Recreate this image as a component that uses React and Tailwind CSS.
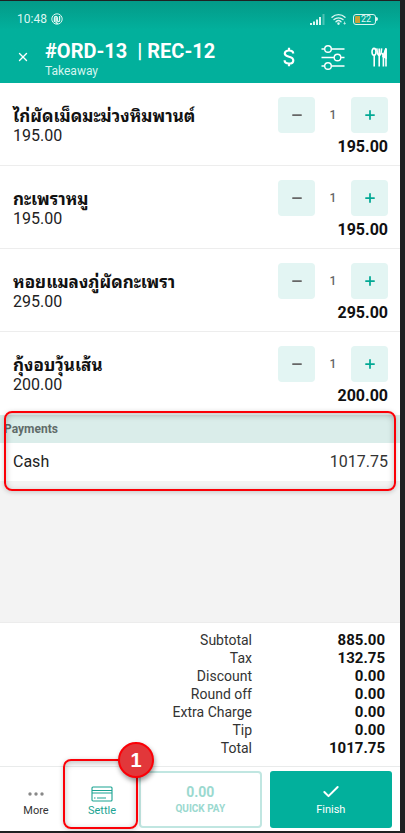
import { Minus, Plus, X, Check } from 'lucide-react';

const ITEMS = [
  { id: 1, name: 'ไก่ผัดเม็ดมะม่วงหิมพานต์', price: '195.00', qty: 1 },
  { id: 2, name: 'กะเพราหมู', price: '195.00', qty: 1 },
  { id: 3, name: 'หอยแมลงภู่ผัดกะเพรา', price: '295.00', qty: 1 },
  { id: 4, name: 'กุ้งอบวุ้นเส้น', price: '200.00', qty: 1 },
];

const TOTALS = [
  ['Subtotal', '885.00'],
  ['Tax', '132.75'],
  ['Discount', '0.00'],
  ['Round off', '0.00'],
  ['Extra Charge', '0.00'],
  ['Tip', '0.00'],
  ['Total', '1017.75'],
];

function StatusBar() {
  return (
    <div className="flex items-center justify-between h-9 pl-[17px] pr-[22px] text-[#dcf7f2]">
      <div className="flex items-center gap-1">
        <span className="text-xs">10:48</span>
        <svg width="12" height="12" viewBox="0 0 12 12" fill="none" stroke="currentColor">
          <circle cx="6" cy="6" r="5.2" strokeWidth="1" />
          <path d="M3.4 9V5a1.5 1.5 0 0 1 3 0v2.6a1.1 1.1 0 0 0 2.2 0V3M5 4.8v3.6a2 2 0 0 0 2 2" strokeWidth="1.3" />
        </svg>
      </div>
      <div className="flex items-center gap-[6px]">
        {/* Signal */}
        <svg width="15" height="11" viewBox="0 0 15 11" fill="currentColor">
          <path d="M0 9h2v2H0zM3 7.5h2V11H3zM6 5.5h2V11H6z" />
          <path d="M9 3h2v8H9z" />
          <path d="M12.5 0h2v11h-2z" opacity="0.35" />
        </svg>
        {/* Wifi */}
        <svg width="16" height="12" viewBox="0 0 16 12" fill="none" stroke="currentColor" strokeWidth="1.4" strokeLinecap="round">
          <path d="M1 4.2a9.6 9.6 0 0 1 13 0M3 6.6a6.6 6.6 0 0 1 9 0M5 8.8a3.6 3.6 0 0 1 5 0" />
          <circle cx="7.5" cy="10.6" r="0.6" fill="currentColor" />
          <path d="M13.6 9v2M12.8 10.3l.8.9.8-.9" strokeWidth="0.8" />
        </svg>
        {/* Battery */}
        <div className="flex items-center">
          <div className="flex items-center w-[23px] h-[11px] p-px gap-px rounded-[3px] border border-current">
            <span className="w-[5px] h-full rounded-l-[1px] bg-[#c9a23a]" />
            <span className="text-[9px] leading-none">22</span>
          </div>
          <span className="w-[2px] h-1 rounded-r bg-current" />
        </div>
      </div>
    </div>
  );
}

function Header() {
  return (
    <header className="h-[82px] shrink-0 bg-gradient-to-b from-[#039a88] via-[#02b09c] via-35% to-[#02b09c] text-white">
      <StatusBar />
      <div className="flex items-center pl-4 pr-[13px]">
        <button aria-label="Close" className="w-[14px] h-6 flex items-center justify-center">
          <X size={14} strokeWidth={2.4} />
        </button>
        <div className="ml-[15px] flex-1">
          <h1 className="text-xl leading-7 font-bold whitespace-pre">#ORD-13  | REC-12</h1>
          <p className="text-xs leading-3 text-[#d4f5ef]">Takeaway</p>
        </div>
        <div className="flex items-center gap-[26px]">
          <button aria-label="Payment">
            <svg width="12" height="20" viewBox="0 0 12 20" fill="none" stroke="currentColor" strokeWidth="2.2">
              <path d="M10.2 6.6C10.2 4.6 8.6 3.5 6 3.5S1.8 4.7 1.8 6.5C1.8 8.4 3.4 9.1 6 9.8s4.3 1.5 4.3 3.6S8.6 16.5 6 16.5 1.6 15.3 1.6 13.2M6 .8v3M6 16.4v2.8" />
            </svg>
          </button>
          <button aria-label="Options">
            <svg width="24" height="26" viewBox="0 0 24 26" fill="none" stroke="currentColor" strokeWidth="1.4">
              <path d="M.5 5h3M10.5 5h13M.5 13.5h12.5M20 13.5h3.5M.5 22h3M10.5 22h13" />
              <circle cx="7" cy="5" r="3.3" />
              <circle cx="16.5" cy="13.5" r="3.3" />
              <circle cx="7" cy="22" r="3.3" />
            </svg>
          </button>
          <button aria-label="Kitchen">
            {/* spoon, fork and knife */}
            <svg width="16" height="20" viewBox="0 0 16 20" fill="none" stroke="currentColor" strokeWidth="1.6">
              <ellipse cx="3" cy="4.8" rx="2" ry="3.4" />
              <path d="M3.2 8.2V19.5" />
              <path d="M5.8 1.4l.6 5L8.2 9l1.8-2.6.6-5M8.2 1.4v18.1" />
              <path d="M11 6l1.4 3.2L15 1.2v18.3M12.4 9v10.5" />
              <path d="M12 9.5 15 2v9z" fill="currentColor" />
            </svg>
          </button>
        </div>
      </div>
    </header>
  );
}

function OrderItem({ item }) {
  return (
    <li className="flex justify-between h-[83px] pt-[14px] pl-[13px] pr-3 border-b border-[#ededed] last:border-b-0">
      <div className="pt-[9px]">
        <h2 className="text-[17px] leading-5 font-bold text-[#111]">{item.name}</h2>
        <p className="text-base leading-5 text-[#222]">{item.price}</p>
      </div>
      <div>
        <div className="flex items-center">
          <button aria-label="Decrease" className="w-[37px] h-9 rounded-sm bg-[#e3f5f3] text-[#666] flex items-center justify-center">
            <Minus size={14} strokeWidth={3} />
          </button>
          <span className="w-9 text-center text-xs font-medium text-[#666]">{item.qty}</span>
          <button aria-label="Increase" className="w-[37px] h-9 rounded-sm bg-[#e3f5f3] text-[#02a894] flex items-center justify-center">
            <Plus size={14} strokeWidth={3} />
          </button>
        </div>
        <p className="mt-1 text-right text-base leading-5 font-bold text-[#111]">{item.price}</p>
      </div>
    </li>
  );
}

function Payments() {
  return (
    <section className="relative">
      <h3 className="h-7 flex items-center pl-1 bg-[#daedea] text-xs font-bold text-[#606b69]">Payments</h3>
      <div className="h-[38px] flex items-center justify-between pl-[13px] pr-3 bg-white text-base text-[#333]">
        <span className="text-[#222]">Cash</span>
        <span>1017.75</span>
      </div>
      {/* Highlight */}
      <div className="absolute -top-1 -bottom-[10px] inset-x-1 rounded-lg border-2 border-[#fb0007] shadow-[0_1px_5px_rgba(0,0,0,0.2),inset_0_2px_6px_rgba(0,0,0,0.25)] pointer-events-none" />
    </section>
  );
}

function BottomBar() {
  return (
    <footer className="flex h-[65px] shrink-0 pt-1 pb-[3px] pl-[3px] pr-2 border-t border-[#e9ebeb] bg-white text-xs">
      <button className="w-[66px] flex flex-col items-center text-[#333]">
        <svg className="mt-[14px]" width="16" height="18" viewBox="0 0 16 18" fill="#888">
          <circle cx="2" cy="9" r="1.7" />
          <circle cx="8" cy="9" r="1.7" />
          <circle cx="14" cy="9" r="1.7" />
        </svg>
        <span className="text-[11px] leading-4">More</span>
      </button>
      <button className="relative w-[66px] flex flex-col items-center text-[#1aa392]">
        <svg className="mt-[14px]" width="22" height="18" viewBox="0 0 22 18" fill="none" stroke="currentColor" strokeWidth="1.1">
          <rect x="1" y="2" width="20" height="14" rx="1" />
          <path d="M1 5.5h20M1 8h20M3 13h1.5M6 13h9" />
        </svg>
        <span className="text-[11px] leading-4">Settle</span>
        {/* Highlight with step number */}
        <span className="absolute -top-3 -bottom-px -left-[6px] -right-[3px] rounded-lg border-2 border-[#fb0007] shadow-[0_1px_5px_rgba(0,0,0,0.2),inset_0_2px_6px_rgba(0,0,0,0.25)]" />
        <span className="absolute -top-[29px] -right-[19px] w-9 h-9 rounded-full border-2 border-[#fb0007] bg-[#e2373a] text-white text-xl font-bold font-['Liberation_Sans',sans-serif] flex items-center justify-center shadow-[1px_3px_5px_rgba(0,0,0,0.4)]">
          1
        </span>
      </button>
      <div className="ml-1 flex-1 grid grid-cols-2 gap-2">
        <button className="flex flex-col items-center justify-center rounded-sm border-2 border-[#c0e6e1] text-[#9bd9cf]">
          <span className="text-sm leading-[18px] font-bold">0.00</span>
          <span className="text-[10px] leading-4 font-bold">QUICK PAY</span>
        </button>
        <button className="flex flex-col items-center justify-center rounded-[3px] bg-[#02b09c] text-white">
          <Check size={20} strokeWidth={2.4} />
          <span className="text-[11px] leading-4">Finish</span>
        </button>
      </div>
    </footer>
  );
}

export default function App() {
  return (
    <div className="min-h-screen flex flex-col pt-px pr-[5px] pb-[2px] bg-[#1f2123] font-['Roboto','Noto_Sans_Thai_Looped','Loma','Noto_Sans_Thai',sans-serif]">
      <Header />
      <main className="flex-1 bg-[#f3f3f3]">
        <ul className="bg-white">
          {ITEMS.map((item) => (
            <OrderItem key={item.id} item={item} />
          ))}
        </ul>
        <Payments />
      </main>
      <section className="border-t border-[#ececec] bg-white pt-2 pb-[9px] pr-[15px]">
        <dl>
          {TOTALS.map(([label, value]) => (
            <div key={label} className="flex justify-end">
              <dt className="text-sm leading-[18px] text-[#333]">{label}</dt>
              <dd className="w-[133px] text-right text-[15px] leading-[18px] font-bold text-[#111]">{value}</dd>
            </div>
          ))}
        </dl>
      </section>
      <BottomBar />
    </div>
  );
}
